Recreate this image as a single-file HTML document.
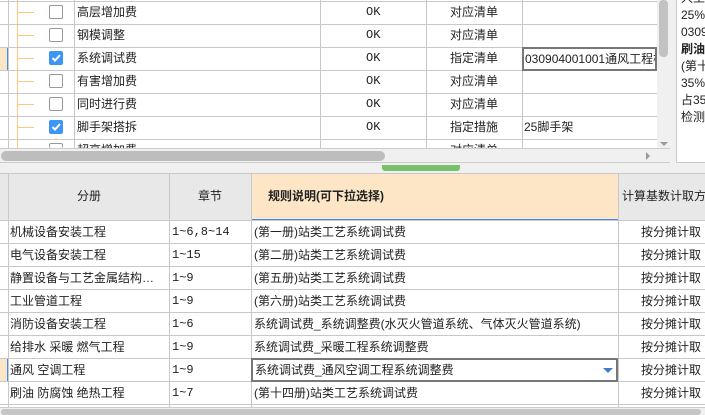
<!DOCTYPE html>
<html><head><meta charset="utf-8"><style>
*{margin:0;padding:0;box-sizing:border-box}
body{width:705px;height:414px;overflow:hidden;background:#f0f0f0;font-family:"Liberation Sans","Noto Sans CJK SC",sans-serif;font-size:12px;color:#222;position:relative}
.a{position:absolute}
.hl{position:absolute;height:1px;background:#c8c8c8}
.vl{position:absolute;width:1px;background:#c8c8c8}
.t{position:absolute;white-space:nowrap;line-height:23px}
.cb{position:absolute;width:14px;height:14px;border:1px solid #999;border-radius:2px;background:#fff}
.cb.on{background:#3d95f5;border-color:#3d95f5}
.mono{font-family:"Liberation Mono","Noto Sans CJK SC",monospace;font-size:12px}
.tr{position:absolute;left:18px;width:16px;height:1px;background:#ffc87a}
</style></head><body>
<!-- top grid -->
<div class="a" style="left:0;top:0;width:657px;height:148px;background:#fff"></div>
<div class="a" style="left:0;top:47px;width:8px;height:23px;background:#fde6c6"></div>
<div class="a" style="left:7px;top:47px;width:2px;height:23px;background:#3d8ef0"></div>
<div class="vl" style="left:8px;top:0;height:148px"></div>
<div class="a" style="left:17px;top:0;width:1px;height:148px;background:#ffc87a"></div>
<div class="vl" style="left:74px;top:0;height:148px"></div>
<div class="vl" style="left:320px;top:0;height:148px"></div>
<div class="vl" style="left:426px;top:0;height:148px"></div>
<div class="vl" style="left:522px;top:0;height:148px"></div>
<div class="hl" style="left:0;top:1px;width:657px"></div>
<div class="hl" style="left:0;top:24px;width:657px"></div>
<div class="hl" style="left:0;top:47px;width:657px"></div>
<div class="hl" style="left:0;top:70px;width:657px"></div>
<div class="hl" style="left:0;top:93px;width:657px"></div>
<div class="hl" style="left:0;top:116px;width:657px"></div>
<div class="hl" style="left:0;top:139px;width:657px"></div>
<div class="tr" style="top:12px"></div>
<div class="tr" style="top:35px"></div>
<div class="tr" style="top:58px"></div>
<div class="tr" style="top:81px"></div>
<div class="tr" style="top:104px"></div>
<div class="tr" style="top:127px"></div>
<div class="cb" style="left:49px;top:5px"></div>
<div class="cb" style="left:49px;top:28px"></div>
<div class="cb on" style="left:49px;top:51px"><svg width="12" height="12" style="position:absolute;left:0;top:0"><path d="M2.5 6 L5 8.5 L10 3" stroke="#fff" stroke-width="2" fill="none"/></svg></div>
<div class="cb" style="left:49px;top:74px"></div>
<div class="cb" style="left:49px;top:97px"></div>
<div class="cb on" style="left:49px;top:120px"><svg width="12" height="12" style="position:absolute;left:0;top:0"><path d="M2.5 6 L5 8.5 L10 3" stroke="#fff" stroke-width="2" fill="none"/></svg></div>
<div class="cb" style="left:49px;top:143px;height:5px;border-bottom:none"></div>
<div class="t" style="left:77px;top:1px">高层增加费</div>
<div class="t" style="left:77px;top:24px">钢模调整</div>
<div class="t" style="left:77px;top:47px">系统调试费</div>
<div class="t" style="left:77px;top:70px">有害增加费</div>
<div class="t" style="left:77px;top:93px">同时进行费</div>
<div class="t" style="left:77px;top:116px">脚手架搭拆</div>
<div class="a" style="left:77px;top:139px;height:9px;overflow:hidden;line-height:23px">超高增加费</div>
<div class="t mono" style="left:366px;top:1px">OK</div>
<div class="t mono" style="left:366px;top:24px">OK</div>
<div class="t mono" style="left:366px;top:47px">OK</div>
<div class="t mono" style="left:366px;top:70px">OK</div>
<div class="t mono" style="left:366px;top:93px">OK</div>
<div class="t mono" style="left:366px;top:116px">OK</div>
<div class="t" style="left:450px;top:1px">对应清单</div>
<div class="t" style="left:450px;top:24px">对应清单</div>
<div class="t" style="left:450px;top:47px">指定清单</div>
<div class="t" style="left:450px;top:70px">对应清单</div>
<div class="t" style="left:450px;top:93px">对应清单</div>
<div class="t" style="left:450px;top:116px">指定措施</div>
<div class="a" style="left:450px;top:139px;height:9px;overflow:hidden;line-height:23px">对应清单</div>
<div class="a" style="left:522px;top:47px;width:135px;height:24px;border:2px solid #777;background:#fff;overflow:hidden;white-space:nowrap;line-height:20px;padding-left:1px;font-size:12px">030904001001通风工程检测</div>
<div class="t" style="left:524px;top:116px;font-size:12px">25脚手架</div>
<!-- vertical scrollbar -->
<div class="a" style="left:657px;top:0;width:13px;height:148px;background:#f0f0f0"></div>
<div class="a" style="left:659px;top:0;width:9px;height:57px;background:#c2c2c2;border-radius:4px"></div>
<div class="a" style="left:660px;top:142px;width:0;height:0;border-left:4px solid transparent;border-right:4px solid transparent;border-top:4px solid #999"></div>
<!-- horizontal scrollbar -->
<div class="a" style="left:0;top:148px;width:670px;height:15px;background:#f0f0f0;border-top:1px solid #ccc;border-bottom:1px solid #ccc"></div>
<div class="a" style="left:1px;top:151px;width:384px;height:10px;background:#bdbdbd;border-radius:5px"></div>
<div class="a" style="left:646px;top:152px;width:0;height:0;border-top:4px solid transparent;border-bottom:4px solid transparent;border-left:4px solid #999"></div>
<!-- right panel -->
<div class="a" style="left:676px;top:0;width:29px;height:163px;background:#fff;border-left:1px solid #ccc;border-bottom:1px solid #ccc;overflow:hidden;font-size:12px;line-height:17px;padding-left:4px;white-space:nowrap">
<div style="margin-top:-10px">人工</div><div>25%</div><div>0309</div><div style="font-weight:bold">刷油</div><div>(第十</div><div>35%</div><div>占35</div><div>检测</div></div>
<!-- green tab -->
<div class="a" style="left:382px;top:165px;width:78px;height:6px;background:#79c06a;border-radius:0 0 3px 3px"></div>
<!-- bottom grid -->
<div class="a" style="left:0;top:173px;width:705px;height:234px;background:#fff;border-top:1px solid #c8c8c8"></div>
<div class="a" style="left:0;top:174px;width:705px;height:46px;background:#e8e8e8"></div>
<div class="a" style="left:251px;top:174px;width:367px;height:46px;background:#fde6c6"></div>
<div class="a" style="left:251px;top:219px;width:367px;height:2px;background:#3d8ef0"></div>
<div class="a" style="left:0;top:358px;width:8px;height:23px;background:#fde6c6"></div>
<div class="a" style="left:7px;top:358px;width:2px;height:23px;background:#3d8ef0"></div>
<div class="vl" style="left:8px;top:174px;height:233px"></div>
<div class="vl" style="left:169px;top:174px;height:233px"></div>
<div class="vl" style="left:251px;top:174px;height:233px"></div>
<div class="vl" style="left:618px;top:174px;height:233px"></div>
<div class="hl" style="left:0;top:220px;width:705px"></div>
<div class="hl" style="left:0;top:243px;width:705px"></div>
<div class="hl" style="left:0;top:266px;width:705px"></div>
<div class="hl" style="left:0;top:289px;width:705px"></div>
<div class="hl" style="left:0;top:312px;width:705px"></div>
<div class="hl" style="left:0;top:335px;width:705px"></div>
<div class="hl" style="left:0;top:358px;width:705px"></div>
<div class="hl" style="left:0;top:381px;width:705px"></div>
<div class="hl" style="left:0;top:404px;width:705px"></div>
<div class="t" style="left:77px;top:185px">分册</div>
<div class="t" style="left:198px;top:185px">章节</div>
<div class="t" style="left:268px;top:185px;font-weight:bold">规则说明(可下拉选择)</div>
<div class="t" style="left:622px;top:185px">计算基数计取方式</div>
<div class="t" style="left:10px;top:221px">机械设备安装工程</div>
<div class="t" style="left:10px;top:244px">电气设备安装工程</div>
<div class="t" style="left:10px;top:267px">静置设备与工艺金属结构…</div>
<div class="t" style="left:10px;top:290px">工业管道工程</div>
<div class="t" style="left:10px;top:313px">消防设备安装工程</div>
<div class="t" style="left:10px;top:336px">给排水 采暖 燃气工程</div>
<div class="t" style="left:10px;top:359px">通风 空调工程</div>
<div class="t" style="left:10px;top:382px">刷油 防腐蚀 绝热工程</div>
<div class="t mono" style="left:172px;top:221px">1~6,8~14</div>
<div class="t mono" style="left:172px;top:244px">1~15</div>
<div class="t mono" style="left:172px;top:267px">1~9</div>
<div class="t mono" style="left:172px;top:290px">1~9</div>
<div class="t mono" style="left:172px;top:313px">1~6</div>
<div class="t mono" style="left:172px;top:336px">1~9</div>
<div class="t mono" style="left:172px;top:359px">1~9</div>
<div class="t mono" style="left:172px;top:382px">1~7</div>
<div class="t" style="left:254px;top:221px">(第一册)站类工艺系统调试费</div>
<div class="t" style="left:254px;top:244px">(第二册)站类工艺系统调试费</div>
<div class="t" style="left:254px;top:267px">(第五册)站类工艺系统调试费</div>
<div class="t" style="left:254px;top:290px">(第六册)站类工艺系统调试费</div>
<div class="t" style="left:254px;top:313px">系统调试费_系统调整费(水灭火管道系统、气体灭火管道系统)</div>
<div class="t" style="left:254px;top:336px">系统调试费_采暖工程系统调整费</div>
<div class="a" style="left:251px;top:358px;width:367px;height:24px;border:2px solid #777;background:#fff;line-height:20px;padding-left:2px;white-space:nowrap">系统调试费_通风空调工程系统调整费</div>
<div class="a" style="left:603px;top:368px;width:0;height:0;border-left:5px solid transparent;border-right:5px solid transparent;border-top:5px solid #3d7fc4"></div>
<div class="t" style="left:254px;top:382px">(第十四册)站类工艺系统调试费</div>
<div class="t" style="left:641px;top:221px">按分摊计取</div>
<div class="t" style="left:641px;top:244px">按分摊计取</div>
<div class="t" style="left:641px;top:267px">按分摊计取</div>
<div class="t" style="left:641px;top:290px">按分摊计取</div>
<div class="t" style="left:641px;top:313px">按分摊计取</div>
<div class="t" style="left:641px;top:336px">按分摊计取</div>
<div class="t" style="left:641px;top:359px">按分摊计取</div>
<div class="t" style="left:641px;top:382px">按分摊计取</div>
<div class="a" style="left:0;top:407px;width:705px;height:7px;background:#f0f0f0;border-top:1px solid #ccc"></div>
<div class="a" style="left:1px;top:409px;width:700px;height:6px;background:#c6c6c6;border-radius:4px"></div>
</body></html>
